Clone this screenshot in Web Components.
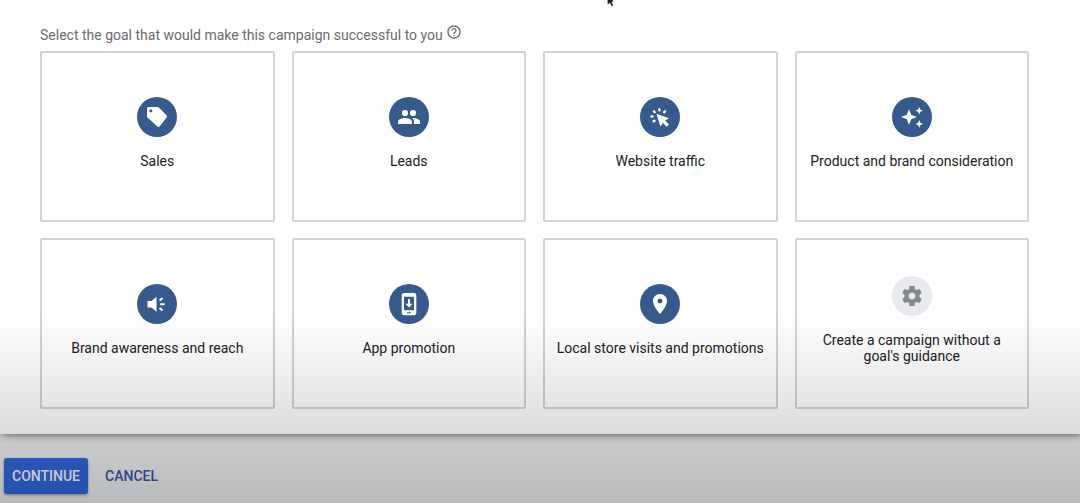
<!DOCTYPE html>
<html lang="en">
<head>
<meta charset="utf-8">
<meta name="viewport" content="width=device-width, initial-scale=1">
<title>New campaign</title>
<style>
  body { margin: 0; background: #eceef0; font: 14px/16px Roboto, sans-serif; color: #202124; }
</style>
</head>
<body>
<campaign-page>
  <goal-picker heading="Select the goal that would make this campaign successful to you">
    <goal-card icon="tag">Sales</goal-card>
    <goal-card icon="people">Leads</goal-card>
    <goal-card icon="click">Website traffic</goal-card>
    <goal-card icon="sparkle">Product and brand consideration</goal-card>
    <goal-card icon="speaker">Brand awareness and reach</goal-card>
    <goal-card icon="phone">App promotion</goal-card>
    <goal-card icon="pin">Local store visits and promotions</goal-card>
    <goal-card icon="gear" muted>Create a campaign without a goal's guidance</goal-card>
  </goal-picker>
  <action-button slot="actions" primary>CONTINUE</action-button>
  <action-button slot="actions">CANCEL</action-button>
</campaign-page>

<script>
const ICONS = {
  tag: '<path fill-rule="evenodd" d="M3.500 2H12.500Q13.300 2 13.900 2.600L21.500 10.200Q22.600 11.300 21.600 12.500L14.800 21.300Q13.700 22.600 12.400 21.400L2.700 12.700Q2 12 2 11V3.500Q2 2 3.500 2zM5.800 4.200a1.600 1.600 0 1 0 0 3.200a1.600 1.600 0 0 0 0-3.200z"/>',
  people: '<circle cx="8" cy="8" r="3.100"/><circle cx="16" cy="8" r="3.100"/><path d="M8 13c-2.330 0-7 1.170-7 3.500V19h14v-2.500c0-2.330-4.670-3.500-7-3.500zm8 0c-.290 0-.620.020-.970.050 1.160.840 1.970 1.970 1.970 3.450V19h6v-2.500c0-2.330-4.670-3.500-7-3.500z"/>',
  click: '<path d="M8.500 8.700l12.500 4.500-3.800 2.400 3.800 3.800-2.300 2.300-3.800-3.800-2.500 3.700z"/><path fill="none" stroke="currentColor" stroke-width="2.400" stroke-linecap="round" d="M16.200 7.200l.7-1M11.400 5.300l-.1-1M6.700 7.200l-.7-.8M4.500 11.500h-1M6.500 15.700l-.8.600"/>',
  sparkle: '<path d="M9 4.200l2.200 5.600L16.800 12l-5.600 2.200L9 19.800l-2.200-5.600L1.200 12l5.600-2.200zM19.200 1.900l1.100 2.700L23 5.700l-2.700 1.100-1.100 2.700-1.100-2.700-2.700-1.100 2.700-1.100zM19.200 15l1.100 2.800 2.700 1.100-2.700 1.100-1.100 2.800-1.100-2.800-2.700-1.100 2.700-1.100z"/>',
  speaker: '<path d="M2.500 9v6.500h4l5 4.300V4.700L6.500 9z"/><path fill="none" stroke="currentColor" stroke-width="2" d="M14.600 8.500l2.900-2.500M15.200 12.300h4.500M14.600 16l2.900 2.500"/>',
  phone: '<path fill-rule="evenodd" d="M7 1h10q2.300 0 2.300 2.300v17.700q0 2.300-2.300 2.300H7q-2.300 0-2.300-2.300V3.300Q4.700 1 7 1zM7 4.800V18.200H17V4.800zM10 20.200v1.100h4v-1.100z"/><path d="M11 7.200h2v4.600h2.500L12 15.500l-3.500-3.700H11z"/>',
  pin: '<path fill-rule="evenodd" d="M12 2C8.130 2 5 5.130 5 9c0 5.250 7 13 7 13s7-7.750 7-13c0-3.870-3.130-7-7-7zm0 9.500a2.500 2.500 0 1 1 0-5 2.500 2.500 0 0 1 0 5z"/>',
  gear: '<path d="M19.430 12.980c.040-.320.070-.640.070-.980s-.030-.660-.070-.980l2.110-1.650c.190-.150.240-.420.120-.640l-2-3.460c-.120-.220-.390-.300-.610-.220l-2.490 1c-.520-.400-1.080-.730-1.690-.980l-.380-2.650C14.460 2.180 14.250 2 14 2h-4c-.250 0-.460.180-.490.420l-.380 2.650c-.610.250-1.170.590-1.690.980l-2.490-1c-.230-.090-.490 0-.610.220l-2 3.460c-.130.220-.070.490.120.640l2.110 1.650c-.040.320-.070.650-.070.980s.030.660.070.980l-2.110 1.650c-.190.150-.240.420-.120.640l2 3.460c.120.220.390.300.610.220l2.490-1c.520.400 1.080.730 1.690.980l.380 2.650c.030.240.240.420.490.420h4c.250 0 .460-.180.490-.420l.380-2.650c.610-.250 1.170-.590 1.690-.980l2.490 1c.230.090.490 0 .610-.220l2-3.460c.120-.220.070-.490-.120-.640l-2.110-1.650zM12 15.500c-1.930 0-3.500-1.570-3.500-3.500s1.570-3.500 3.500-3.500 3.500 1.570 3.500 3.500-1.570 3.500-3.500 3.500z"/>',
  help: '<path d="M11 18h2v-2h-2v2zm1-16C6.480 2 2 6.480 2 12s4.480 10 10 10 10-4.480 10-10S17.520 2 12 2zm0 18c-4.410 0-8-3.590-8-8s3.590-8 8-8 8 3.590 8 8-3.590 8-8 8zm0-14c-2.210 0-4 1.790-4 4h2c0-1.100.9-2 2-2s2 .9 2 2c0 2-3 1.750-3 5h2c0-2.250 3-2.500 3-5 0-2.210-1.790-4-4-4z"/>'
};
const icon = name => `<svg viewBox="0 0 24 24" fill="currentColor" aria-hidden="true">${ICONS[name]}</svg>`;

class GoalCard extends HTMLElement {
  connectedCallback() {
    this.attachShadow({ mode: 'open' }).innerHTML = `
      <style>
        :host { display: grid; }
        button {
          display: flex; flex-direction: column; align-items: center; justify-content: center; gap: 16px;
          box-sizing: border-box; min-height: 171px; padding: 0 8px 8px;
          border: 2px solid #d2d3d4; border-radius: 2px; background: none;
          font: inherit; color: inherit; cursor: pointer;
        }
        .disc {
          display: grid; place-items: center; width: 40px; height: 40px;
          border-radius: 50%; background: #375a8c; color: #fff;
        }
        :host([muted]) .disc { background: #e8eaed; color: #85898e; }
        svg { display: block; width: 24px; height: 24px; }
      </style>
      <button type="button"><span class="disc">${icon(this.getAttribute('icon'))}</span><span><slot></slot></span></button>`;
  }
}

class GoalPicker extends HTMLElement {
  connectedCallback() {
    this.attachShadow({ mode: 'open' }).innerHTML = `
      <style>
        :host { display: block; padding: 24px 51px 25px 40px; background: #fff; box-shadow: 2px 1px 8px #0000008c; }
        header { display: flex; align-items: flex-end; gap: 3px; height: 19px; margin-bottom: 8px; color: #6a6c6f; }
        h1 { margin: 0; font: inherit; }
        .help { align-self: flex-start; padding: 0; border: 0; background: none; color: inherit; cursor: pointer; }
        svg { display: block; width: 16px; height: 16px; }
        .goals { display: grid; grid-template-columns: repeat(4, minmax(0, 1fr)); gap: 16px 17px; }
      </style>
      <header><h1></h1><button class="help" type="button" aria-label="Help">${icon('help')}</button></header>
      <div class="goals"><slot></slot></div>`;
    this.shadowRoot.querySelector('h1').textContent = this.getAttribute('heading');
  }
}

class ActionButton extends HTMLElement {
  connectedCallback() {
    this.attachShadow({ mode: 'open' }).innerHTML = `
      <style>
        :host { display: block; }
        button {
          height: 36px; padding: 0 8px; border: 0; border-radius: 3px; background: none;
          font: inherit; font-weight: 500; color: #3a56a6; cursor: pointer;
        }
        :host([primary]) button { background: #3166dd; color: #f4f8ff; box-shadow: 0 1px 3px #0006; }
      </style>
      <button type="button"><slot></slot></button>`;
  }
}

class CampaignPage extends HTMLElement {
  connectedCallback() {
    this.attachShadow({ mode: 'open' }).innerHTML = `
      <style>
        :host { display: block; position: relative; min-height: 100vh; overflow: hidden; }
        footer { display: flex; gap: 9px; padding: 24px 4px 9px; }
        .scrim {
          position: absolute; inset: auto 0 0; height: 188px; pointer-events: none;
          background: linear-gradient(#0000, #00000038);
        }
        .pointer { position: absolute; top: 0; left: 56.2%; width: 8px; height: 8px; }
      </style>
      <slot></slot>
      <footer><slot name="actions"></slot></footer>
      <div class="scrim"></div>
      <svg class="pointer" viewBox="0 0 8 8" aria-hidden="true"><path fill="#222" d="M.5 0h5l1 1.500-2 .5 1.700 3.500-1.600.8-1.700-3.500L.7 4.500z"/></svg>`;
  }
}

customElements.define('goal-card', GoalCard);
customElements.define('goal-picker', GoalPicker);
customElements.define('action-button', ActionButton);
customElements.define('campaign-page', CampaignPage);
</script>
</body>
</html>
